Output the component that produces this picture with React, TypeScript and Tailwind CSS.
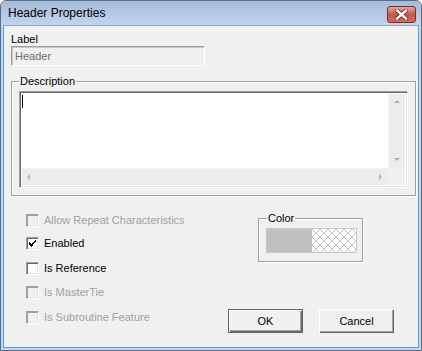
import React from "react";

const font = { fontFamily: '"Liberation Sans", Arial, sans-serif' };

function CheckBox({ checked, disabled }: { checked?: boolean; disabled?: boolean }) {
  return (
    <div
      className={
        "relative w-[13px] h-[13px] shrink-0 border border-t-[#a0a0a0] border-l-[#a0a0a0] border-b-white border-r-white " +
        (disabled
          ? "bg-[#f0f0f0] shadow-[inset_1px_1px_0_#a0a0a0,inset_-1px_-1px_0_#e3e3e3]"
          : "bg-white shadow-[inset_1px_1px_0_#696969,inset_-1px_-1px_0_#e3e3e3]")
      }
    >
      {checked && (
        <svg className="absolute left-[1px] top-[1px]" width="9" height="9" viewBox="0 0 9 9" shapeRendering="crispEdges">
          <path d="M1 3h1v1H1zM1 4h2v1H1zM1 5h3v1H1zM2 6h3v1H2zM3 7h1v1H3zM4 5h1v1H4zM4 4h2v1H4zM5 3h2v1H5zM6 2h2v1H6zM7 1h1v1H7zM3 6h2v1H3z" fill="#000" />
        </svg>
      )}
    </div>
  );
}

function CheckRow({ label, checked, disabled, mt }: { label: string; checked?: boolean; disabled?: boolean; mt: string }) {
  return (
    <div className={"flex items-center h-[13px] " + mt}>
      <CheckBox checked={checked} disabled={disabled} />
      <span className={"ml-[5px] text-[11px] leading-[13px] whitespace-nowrap " + (disabled ? "text-[#a0a0a0]" : "text-black")}>
        {label}
      </span>
    </div>
  );
}

function Triangle({ dir }: { dir: "up" | "down" | "left" | "right" }) {
  const d =
    dir === "up"
      ? "M0 3L3 0L6 3Z"
      : dir === "down"
      ? "M0 0L6 0L3 3Z"
      : dir === "left"
      ? "M3 0L3 6L0 3Z"
      : "M0 0L3 3L0 6Z";
  const w = dir === "up" || dir === "down" ? 7 : 4;
  const h = dir === "up" || dir === "down" ? 4 : 7;
  return (
    <svg width={w} height={h} viewBox={`0 0 ${w} ${h}`}>
      <path d={d} fill="#b0b0b0" />
    </svg>
  );
}

function Button({ label, isDefault }: { label: string; isDefault?: boolean }) {
  return (
    <div
      className={
        "w-[75px] h-[24px] flex items-center justify-center text-[11px] text-black bg-[#f0f0f0] " +
        (isDefault
          ? "border border-[#646464] shadow-[inset_1px_1px_0_#fff,inset_-1px_-1px_0_#696969,inset_-2px_-2px_0_#a0a0a0]"
          : "shadow-[inset_1px_1px_0_#fff,inset_-1px_-1px_0_#696969,inset_-2px_-2px_0_#a0a0a0]")
      }
    >
      {label}
    </div>
  );
}

export default function App() {
  return (
    <div className="w-[422px] h-[351px] flex flex-col bg-[#c5d7ee] border border-[#5b6d86] rounded-t-[6px] overflow-hidden" style={font}>
      {/* Title bar */}
      <div className="h-[24px] shrink-0 flex items-center bg-gradient-to-b from-[#a5bcd9] to-[#c0d4ed] pl-[7px] pr-[5px]">
        <span className="text-[12px] text-black" style={{ fontFamily: '"Liberation Sans", Arial, sans-serif' }}>
          Header Properties
        </span>
        <div className="ml-auto mt-[2px] w-[29px] h-[17px] rounded-[3px] border border-[#7b2d2d] bg-gradient-to-b from-[#e6a597] via-[#c8564a] to-[#d46a58] flex items-center justify-center">
          <svg width="13" height="11" viewBox="0 0 13 11">
            <path d="M2 1.5L11 9.5M11 1.5L2 9.5" stroke="#5a2a2a" strokeWidth="4" strokeLinecap="square" />
            <path d="M2 1.5L11 9.5M11 1.5L2 9.5" stroke="#ffffff" strokeWidth="2.4" strokeLinecap="square" />
          </svg>
        </div>
      </div>
      {/* Body with frame */}
      <div className="flex-1 px-[2px] pb-[2px] bg-[#c5d7ee]">
        <div className="w-full h-full bg-[#f0f0f0] border border-[#4aa3dd] border-t-[#8fa7c6] flex flex-col">
          <div className="pl-[7px] pt-[7px]">
            <div className="text-[11px] leading-[13px] text-black">Label</div>
            <div className="w-[194px] h-[20px] bg-[#f0f0f0] border border-t-[#a0a0a0] border-l-[#a0a0a0] border-b-white border-r-white shadow-[inset_1px_1px_0_#c8c8c8] flex items-center pl-[3px] text-[11px] text-[#6d6d6d]">
              Header
            </div>
            {/* Description group */}
            <div className="relative mt-[15px] w-[405px] h-[115px] border border-[#a0a0a0] shadow-[inset_1px_1px_0_#fff,1px_1px_0_#fff] pl-[7px] pt-[9px]">
              <span className="absolute left-[7px] top-[-7px] px-[1px] bg-[#f0f0f0] text-[11px] leading-[13px] text-black">Description</span>
              <div className="w-[389px] h-[97px] bg-white border border-t-[#a0a0a0] border-l-[#a0a0a0] border-b-white border-r-white shadow-[inset_1px_1px_0_#696969,inset_-1px_-1px_0_#e3e3e3] p-[2px] flex">
                <div className="flex-1 flex flex-col">
                  <div className="flex-1 pt-[1px]">
                    <div className="w-[1px] h-[13px] bg-black" />
                  </div>
                  <div className="h-[17px] bg-[#ececec] flex items-center justify-between px-[5px] border-t border-[#f6f6f6]">
                    <Triangle dir="left" />
                    <Triangle dir="right" />
                  </div>
                </div>
                <div className="w-[17px] flex flex-col">
                  <div className="flex-1 bg-[#ececec] flex flex-col items-center justify-between py-[6px] border-l border-[#f6f6f6]">
                    <Triangle dir="up" />
                    <Triangle dir="down" />
                  </div>
                  <div className="h-[17px] bg-[#f0f0f0]" />
                </div>
              </div>
            </div>
          </div>
          {/* Bottom section */}
          <div className="flex flex-1 pl-[22px]">
            <div className="w-[202px] flex flex-col pt-[18px]">
              <CheckRow label="Allow Repeat Characteristics" disabled mt="mt-0" />
              <CheckRow label="Enabled" checked mt="mt-[10px]" />
              <CheckRow label="Is Reference" mt="mt-[12px]" />
              <CheckRow label="Is MasterTie" disabled mt="mt-[11px]" />
              <CheckRow label="Is Subroutine Feature" disabled mt="mt-[12px]" />
            </div>
            <div className="flex flex-col pt-[22px]">
              <div className="relative ml-[30px] w-[105px] h-[44px] border border-[#a0a0a0] shadow-[inset_1px_1px_0_#fff,1px_1px_0_#fff] pl-[7px] pt-[9px]">
                <span className="absolute left-[8px] top-[-7px] px-[1px] bg-[#f0f0f0] text-[11px] leading-[13px] text-black">Color</span>
                <div className="w-[91px] h-[25px] flex border border-[#c8c8c8]">
                  <div className="w-[45px] h-full bg-[#c0c0c0]" />
                  <svg className="flex-1 h-full" width="44" height="23">
                    <defs>
                      <pattern id="chk" width="8" height="8" patternUnits="userSpaceOnUse">
                        <rect width="8" height="8" fill="#fff" />
                        <path d="M0 0L8 8M8 0L0 8" stroke="#c4c4c4" strokeWidth="1" />
                      </pattern>
                    </defs>
                    <rect width="100%" height="100%" fill="url(#chk)" />
                  </svg>
                </div>
              </div>
              <div className="flex mt-[47px] gap-[16px]">
                <Button label="OK" isDefault />
                <Button label="Cancel" />
              </div>
            </div>
          </div>
        </div>
      </div>
    </div>
  );
}
